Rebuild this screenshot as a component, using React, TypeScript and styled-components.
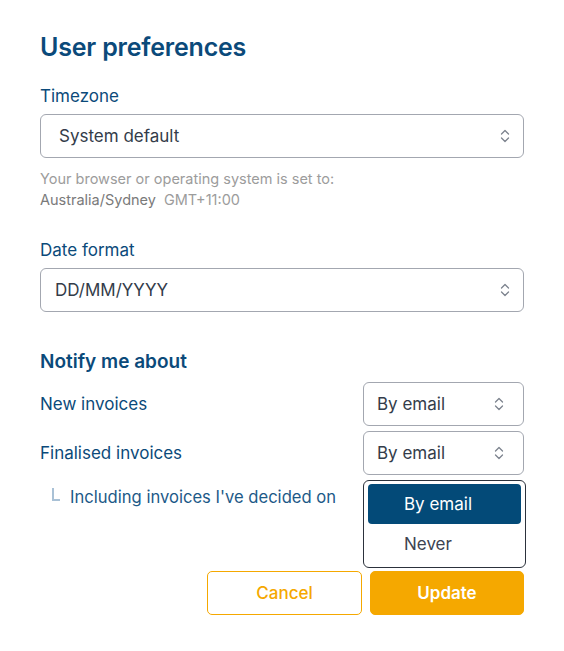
import styled, { createGlobalStyle } from "styled-components";

const navy = "#0b4a7a";
const orange = "#f5a800";

const GlobalStyle = createGlobalStyle`
  body {
    margin: 0;
    background: #fff;
    font-family: Inter, "Noto Sans", sans-serif;
  }
`;

const Page = styled.div`
  width: 484px;
  padding: 30px 40px 0;
`;

const Title = styled.h1`
  margin: 0 0 22px;
  font-size: 25px;
  line-height: 34px;
  font-weight: 600;
  color: ${navy};
  letter-spacing: -0.2px;
`;

const Label = styled.div`
  font-size: 17px;
  line-height: 20px;
  color: ${navy};
  margin-bottom: 8px;
`;

const Field = styled.div<{ $gap: number }>`
  margin-bottom: ${(p) => p.$gap}px;
`;

const SelectBox = styled.div<{ $pad: number; $right: number }>`
  position: relative;
  box-sizing: border-box;
  height: 44px;
  border: 1px solid #a3a7b0;
  border-radius: 6px;
  display: flex;
  align-items: center;
  padding: 0 ${(p) => p.$right}px 0 ${(p) => p.$pad}px;
  font-size: 17px;
  color: #333c4a;
  background: #fff;
`;

const Value = styled.span`
  flex: 1;
`;

const Help = styled.div`
  margin-top: 10px;
  font-size: 14.5px;
  line-height: 21px;
  color: #9c9c9c;
`;

const Zone = styled.span`
  color: #7a7a7a;
  margin-right: 8px;
`;

const Heading = styled.h2`
  margin: 0 0 8px;
  font-size: 19px;
  line-height: 24px;
  font-weight: 600;
  color: ${navy};
`;

const Row = styled.div`
  position: relative;
  display: flex;
  align-items: center;
  justify-content: space-between;
  margin-bottom: 5px;
`;

const RowLabel = styled.span`
  font-size: 17px;
  color: ${navy};
`;

const SmallSelect = styled.div`
  width: 161px;
`;

const SubRow = styled.div`
  display: flex;
  align-items: center;
  gap: 10px;
  padding-left: 12px;
  margin-top: 12px;
  height: 20px;
`;

const Branch = styled.span`
  width: 6px;
  height: 11px;
  margin-top: -6px;
  border-left: 2px solid #a9c1d6;
  border-bottom: 2px solid #a9c1d6;
`;

const SubLabel = styled.span`
  font-size: 16.6px;
  color: #1d5a88;
`;

const Menu = styled.div`
  position: absolute;
  right: -2px;
  top: 49px;
  width: 163px;
  box-sizing: border-box;
  padding: 3px 4px 3px;
  border: 1px solid #2c323c;
  border-radius: 6px;
  background: #fff;
  z-index: 2;
`;

const Option = styled.div<{ $active?: boolean }>`
  height: 40px;
  display: flex;
  align-items: center;
  padding-left: 36px;
  border-radius: 4px;
  font-size: 17px;
  color: ${(p) => (p.$active ? "#fff" : "#3d4452")};
  background: ${(p) => (p.$active ? "#034a78" : "transparent")};
`;

const Actions = styled.div`
  display: flex;
  justify-content: flex-end;
  gap: 8px;
  margin-top: 64px;
`;

const Button = styled.button<{ $primary?: boolean }>`
  width: ${(p) => (p.$primary ? 154 : 155)}px;
  height: 44px;
  border-radius: 5px;
  font-family: inherit;
  font-size: 17px;
  font-weight: ${(p) => (p.$primary ? 600 : 500)};
  border: 1px solid ${orange};
  background: ${(p) => (p.$primary ? orange : "#fff")};
  color: ${(p) => (p.$primary ? "#fff" : orange)};
`;

const Chevrons = () => (
  <svg width="10" height="14" viewBox="0 0 10 14" fill="none">
    <path
      d="M1.5 5 L5 1.5 L8.5 5 M1.5 9 L5 12.5 L8.5 9"
      stroke="#7d838e"
      strokeWidth="1.3"
      strokeLinecap="round"
      strokeLinejoin="round"
    />
  </svg>
);

const Select = ({
  value,
  pad,
  right,
}: {
  value: string;
  pad: number;
  right: number;
}) => (
  <SelectBox $pad={pad} $right={right}>
    <Value>{value}</Value>
    <Chevrons />
  </SelectBox>
);

export default function App() {
  return (
    <>
      <GlobalStyle />
      <Page>
        <Title>User preferences</Title>
        <Field $gap={30}>
          <Label>Timezone</Label>
          <Select value="System default" pad={18} right={13} />
          <Help>
            Your browser or operating system is set to:
            <br />
            <Zone>Australia/Sydney</Zone>GMT+11:00
          </Help>
        </Field>
        <Field $gap={38}>
          <Label>Date format</Label>
          <Select value="DD/MM/YYYY" pad={14} right={13} />
        </Field>
        <Heading>Notify me about</Heading>
        <Row>
          <RowLabel>New invoices</RowLabel>
          <SmallSelect>
            <Select value="By email" pad={13} right={19} />
          </SmallSelect>
        </Row>
        <Row>
          <RowLabel>Finalised invoices</RowLabel>
          <SmallSelect>
            <Select value="By email" pad={13} right={19} />
          </SmallSelect>
          <Menu>
            <Option $active>By email</Option>
            <Option>Never</Option>
          </Menu>
        </Row>
        <SubRow>
          <Branch />
          <SubLabel>Including invoices I've decided on</SubLabel>
        </SubRow>
        <Actions>
          <Button>Cancel</Button>
          <Button $primary>Update</Button>
        </Actions>
      </Page>
    </>
  );
}
